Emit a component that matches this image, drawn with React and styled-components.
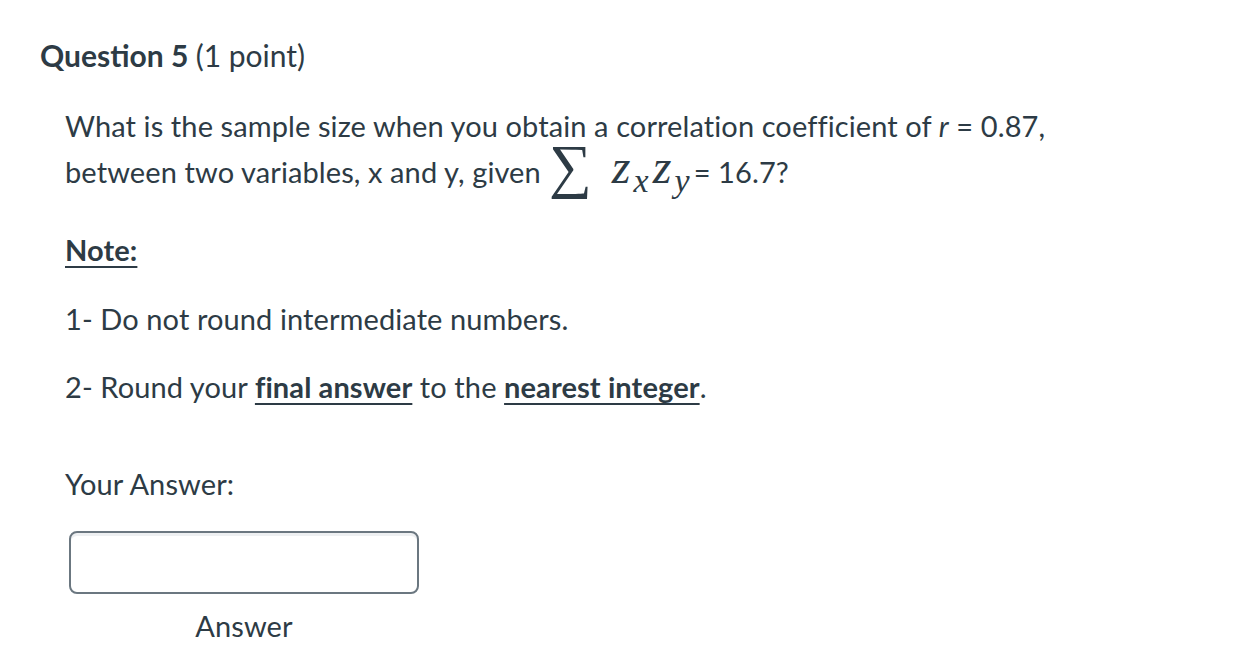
import React from 'react';
import styled, { createGlobalStyle } from 'styled-components';

const GlobalStyle = createGlobalStyle`
    html, body {
        margin: 0;
        padding: 0;
        background: #ffffff;
    }
    body {
        font-family: Lato, "Noto Sans", sans-serif;
        color: #2d3b45;
    }
`;

const Page = styled.div`
    padding: 37px 40px 0 40px;
`;

const Heading = styled.h2`
    margin: 0;
    font-size: 30px;
    line-height: 36px;
    font-weight: 700;
`;

const Points = styled.span`
    font-weight: 400;
`;

const Body = styled.div`
    padding: 0 0 0 25px;
    margin-top: 30px;
    font-size: 29px;
    letter-spacing: 0.1px;
`;

const Para = styled.p`
    margin: 0 0 ${props => props.gap || 0}px 0;
    line-height: 46px;
    white-space: nowrap;
`;

const Strong = styled.span`
    font-weight: 700;
    text-decoration: underline;
    text-underline-offset: 5px;
    text-decoration-thickness: 2px;
`;

const Italic = styled.span`
    font-style: italic;
`;

/* the math bit: a big sigma and two italic z's with subscripts */
const Math = styled.span`
    display: inline-flex;
    align-items: baseline;
    margin: 0 3px 0 8px;
    line-height: 0;
`;

const Sigma = styled.span`
    font-family: "Liberation Serif", "DejaVu Serif", serif;
    font-size: 60px;
    margin-right: 20px;
    position: relative;
    top: 3px;
`;

const MathVar = styled.span`
    font-family: "Liberation Serif", serif;
    font-style: italic;
    font-size: 48px;
`;

const Sub = styled.span`
    font-family: "Liberation Serif", serif;
    font-style: italic;
    font-size: 34px;
    position: relative;
    top: 9px;
    margin: 0 ${props => props.after || 4}px 0 3px;
`;

const AnswerBlock = styled.div`
    margin-top: 51px;
    display: flex;
    flex-direction: column;
    align-items: flex-start;
`;

const AnswerField = styled.div`
    margin-top: 24px;
    margin-left: 4px;
    display: flex;
    flex-direction: column;
    align-items: center;
    gap: 16px;
`;

const Input = styled.input`
    box-sizing: border-box;
    width: 350px;
    height: 63px;
    border: 2px solid #6b7780;
    border-radius: 8px;
    box-shadow: inset 0 3px 0 #eef0f2;
    background: #ffffff;
    font-family: Lato, sans-serif;
    font-size: 24px;
    padding: 0 14px;
    outline: none;
`;

const Label = styled.label`
    font-size: 29px;
    line-height: 32px;
`;

export default function App() {
    return (
        <>
            <GlobalStyle />
            <Page>
                <Heading>Question 5 <Points>(1 point)</Points></Heading>
                <Body>
                    <Para gap={32}>
                        What is the sample size when you obtain a correlation coefficient of <Italic>r</Italic> = 0.87,
                        <br />
                        between two variables, x and y, given
                        <Math>
                            <Sigma>∑</Sigma>
                            <MathVar>z</MathVar><Sub>x</Sub>
                            <MathVar>z</MathVar><Sub after={1}>y</Sub>
                        </Math>= 16.7?
                    </Para>
                    <Para gap={23}><Strong>Note:</Strong></Para>
                    <Para gap={22}>1- Do not round intermediate numbers.</Para>
                    <Para>2- Round your <Strong>final answer</Strong> to the <Strong>nearest integer</Strong>.</Para>
                    <AnswerBlock>
                        <Para>Your Answer:</Para>
                        <AnswerField>
                            <Input type="text" aria-label="Answer" />
                            <Label>Answer</Label>
                        </AnswerField>
                    </AnswerBlock>
                </Body>
            </Page>
        </>
    );
}
